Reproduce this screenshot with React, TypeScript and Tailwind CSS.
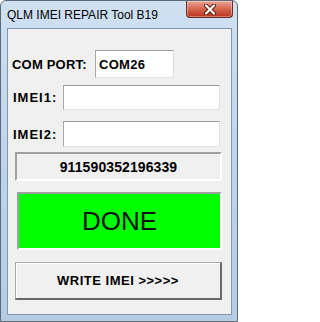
export default function App() {
  const font = { fontFamily: '"Liberation Sans", Arial, sans-serif' };
  const field =
    "bg-white border border-t-[#9c9c9c] border-l-[#a8a8a8] border-r-[#dedede] border-b-[#e2e2e2]";

  return (
    <div
      className="flex h-[322px] w-[238px] flex-col overflow-hidden rounded-t-[6px] border border-[#5b6b7c] bg-gradient-to-b from-[#cfe0f2] via-[#bdd4ec] to-[#b4cce4]"
      style={font}
    >
      {/* title bar */}
      <div className="flex h-[27px] items-start justify-between pl-[6px] pr-[4px]">
        <span className="pt-[7px] text-[12px] leading-[14px] text-black">QLM IMEI REPAIR Tool B19</span>
        <div className="flex h-[17px] w-[47px] items-center justify-center rounded-b-[4px] border border-t-0 border-[#6b2a22] bg-gradient-to-b from-[#e9a796] via-[#d4644c] to-[#b8321d] shadow-[inset_0_0_0_1px_rgba(255,255,255,0.35)]">
          <svg width="12" height="11" viewBox="0 0 12 11">
            <path d="M2 1.5 L10 9.5 M10 1.5 L2 9.5" stroke="#5a1a10" strokeWidth="4" strokeLinecap="round" />
            <path d="M2 1.5 L10 9.5 M10 1.5 L2 9.5" stroke="#ffffff" strokeWidth="2.2" strokeLinecap="round" />
          </svg>
        </div>
      </div>

      {/* frame sides */}
      <div className="flex flex-1 pb-[6px] pl-[6px] pr-[5px]">
        <div className="flex h-[287px] w-[225px] flex-col border border-[#8797aa] bg-[#f0f0f0] pt-[21px]">
          {/* COM PORT */}
          <div className="flex items-center pl-[4px]">
            <span className="w-[83px] text-[13px] font-bold leading-[15px] tracking-[0.2px] text-black">COM PORT:</span>
            <div className={`${field} h-[28px] w-[79px] pl-[3px] pt-[1px]`}>
              <span className="text-[13px] font-bold leading-[15px] tracking-[0.3px] text-black">COM26</span>
            </div>
          </div>

          {/* IMEI1 */}
          <div className="mt-[7px] flex items-center pl-[5px]">
            <span className="w-[50px] text-[13px] font-bold leading-[15px] tracking-[1px] text-black">IMEI1:</span>
            <div className={`${field} h-[25px] w-[157px]`} />
          </div>

          {/* IMEI2 */}
          <div className="mt-[11px] flex items-center pl-[5px]">
            <span className="w-[50px] text-[13px] font-bold leading-[15px] tracking-[1px] text-black">IMEI2:</span>
            <div className={`${field} h-[26px] w-[157px]`} />
          </div>

          {/* IMEI display */}
          <div className="ml-[7px] mt-[5px] flex h-[29px] w-[207px] items-center justify-center border-2 border-t-[#a0a0a0] border-l-[#a0a0a0] border-r-[#ffffff] border-b-[#ffffff] bg-[#f0f0f0]">
            <span className="text-[14px] font-bold leading-[16px] tracking-[0.1px] text-black">911590352196339</span>
          </div>

          {/* status */}
          <div className="ml-[9px] mt-[11px] flex h-[58px] w-[205px] items-center justify-center border-2 border-t-[#a0a0a0] border-l-[#a0a0a0] border-r-[#ffffff] border-b-[#ffffff] bg-[#00ff00]">
            <span className="text-[26px] leading-[30px] text-[#111111]">DONE</span>
          </div>

          {/* write button */}
          <button className="ml-[7px] mt-[12px] flex h-[38px] w-[207px] items-center justify-center border border-r-2 border-b-2 border-t-[#a8a8a8] border-l-[#a8a8a8] border-r-[#696969] border-b-[#696969] bg-[#f0f0f0] shadow-[inset_1px_1px_0_#ffffff]">
            <span className="text-[13px] font-bold leading-[15px] tracking-[0.5px] text-black">WRITE IMEI &gt;&gt;&gt;&gt;&gt;</span>
          </button>
        </div>
      </div>
    </div>
  );
}
